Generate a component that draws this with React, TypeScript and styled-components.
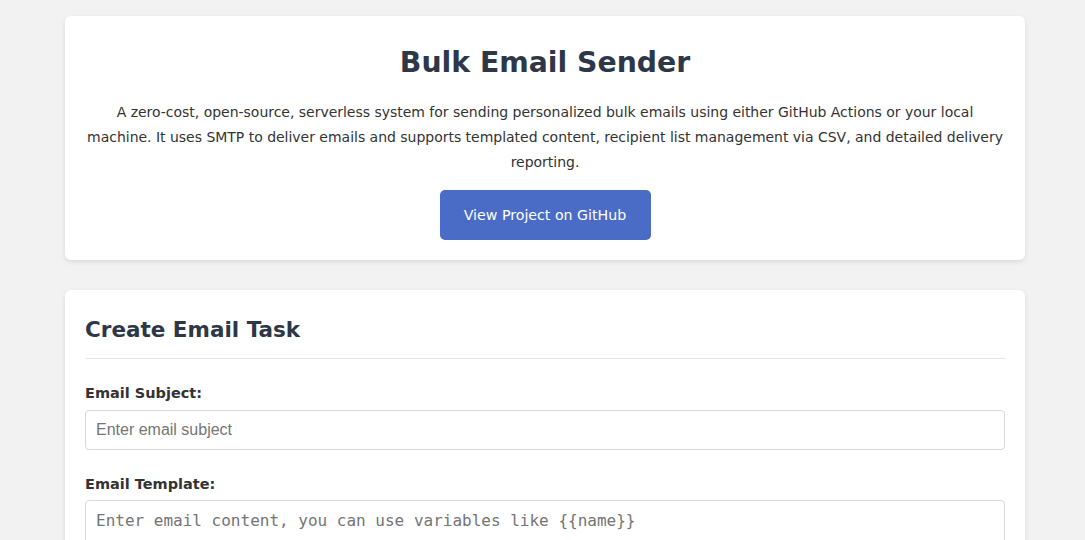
import styled, { createGlobalStyle } from 'styled-components'

const GlobalStyle = createGlobalStyle`
  body {
    margin: 0;
    background: #f2f2f2;
    font-family: Tahoma, "DejaVu Sans", sans-serif;
    color: #333;
  }
`

const Page = styled.div`
  display: flex;
  flex-direction: column;
  gap: 30px;
  margin: 0 60px 0 65px;
  padding-top: 16px;
`

const Card = styled.section<{ $center?: boolean }>`
  background: #fff;
  border-radius: 6px;
  box-shadow: 0 2px 5px rgba(0, 0, 0, 0.1);
  padding: 20px;
  text-align: ${p => (p.$center ? 'center' : 'left')};
`

const Title = styled.h1`
  margin: 8px 0 18px;
  font-size: 28.3px;
  line-height: 38px;
  color: #2d3748;
`

const Intro = styled.p`
  margin: 0 0 15px;
  font-size: 14px;
  line-height: 25px;
  color: #333;
  letter-spacing: -0.02px;
`

const LinkButton = styled.a`
  display: inline-flex;
  align-items: center;
  justify-content: center;
  width: 211px;
  height: 50px;
  background: #4a6cc6;
  color: #fff;
  border-radius: 5px;
  font-size: 14.2px;
  text-decoration: none;
`

const SectionTitle = styled.h2`
  margin: 5px 0 24px;
  padding-bottom: 13px;
  border-bottom: 1px solid #e8e8e8;
  font-size: 21.5px;
  line-height: 30px;
  color: #2d3748;
`

const Field = styled.div`
  display: flex;
  flex-direction: column;
  gap: 7px;
  margin-bottom: 24px;
`

const Label = styled.label`
  font-weight: bold;
  font-size: 14.5px;
  line-height: 20px;
  color: #333;
`

const Input = styled.input`
  box-sizing: border-box;
  height: 40px;
  padding: 0 10px;
  border: 1px solid #d8d8d8;
  border-radius: 4px;
  font-family: "Liberation Sans", Arial, sans-serif;
  font-size: 16px;

  &::placeholder {
    color: #757575;
  }
`

const TextArea = styled.textarea`
  box-sizing: border-box;
  height: 200px;
  margin-top: -1px;
  padding: 10px;
  border: 1px solid #d8d8d8;
  border-radius: 4px;
  font-family: "DejaVu Sans Mono", monospace;
  font-size: 16px;
  resize: vertical;

  &::placeholder {
    color: #757575;
  }
`

export default function App (): JSX.Element {
  return (
    <>
      <GlobalStyle />
      <Page>
        <Card $center>
          <Title>Bulk Email Sender</Title>
          <Intro>
            A zero-cost, open-source, serverless system for sending personalized bulk emails using either GitHub Actions or your local machine. It uses SMTP to deliver emails and supports templated content, recipient list management via CSV, and detailed delivery reporting.
          </Intro>
          <LinkButton href='#'>View Project on GitHub</LinkButton>
        </Card>

        <Card>
          <SectionTitle>Create Email Task</SectionTitle>
          <Field>
            <Label htmlFor='subject'>Email Subject:</Label>
            <Input id='subject' placeholder='Enter email subject' />
          </Field>
          <Field>
            <Label htmlFor='template'>Email Template:</Label>
            <TextArea id='template' placeholder='Enter email content, you can use variables like {{name}}' />
          </Field>
        </Card>
      </Page>
    </>
  )
}
